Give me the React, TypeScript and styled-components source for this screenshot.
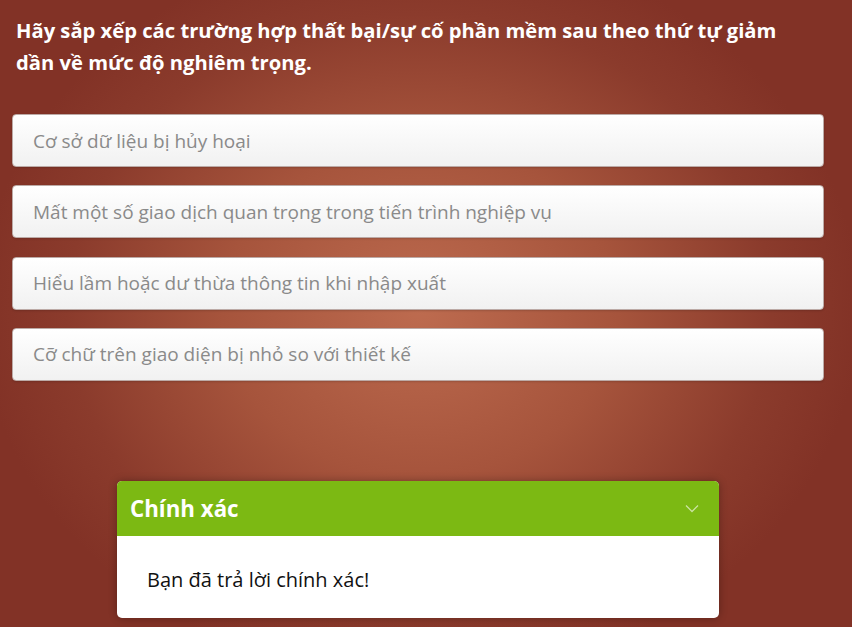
import React from "react";
import styled, { createGlobalStyle } from "styled-components";

const Global = createGlobalStyle`
  html, body { margin: 0; padding: 0; }
  body {
    width: 852px;
    height: 627px;
    overflow: hidden;
    font-family: "Open Sans", "Noto Sans", sans-serif;
  }
`;

const Page = styled.div`
  width: 852px;
  height: 627px;
  box-sizing: border-box;
  background: radial-gradient(ellipse 440px 370px at 420px 310px, #bd6b4f 0%, #a6543c 45%, #8b3b2c 80%, #823226 100%);
  padding: 14px 28px 0 12px;
  display: flex;
  flex-direction: column;
`;

const Title = styled.h1`
  margin: 0 0 0 4px;
  max-width: 785px;
  font-family: "Open Sans", sans-serif;
  font-weight: 700;
  font-size: 20.2px;
  line-height: 32px;
  color: #ffffff;
`;

const List = styled.div`
  margin-top: 36px;
  display: flex;
  flex-direction: column;
  gap: 18.3px;
`;

const Item = styled.div`
  height: 53px;
  box-sizing: border-box;
  border: 1px solid #bcaaa6;
  border-radius: 4px;
  background: linear-gradient(#ffffff, #f1f1f1);
  box-shadow: 0 1px 2px rgba(0, 0, 0, 0.15);
  display: flex;
  align-items: center;
  padding: 0 20px;
  font-family: "Open Sans", sans-serif;
  font-size: 19px;
  color: #8a8a8a;
`;

const Feedback = styled.div`
  margin: 100px 0 0 105px;
  width: 602px;
  border-radius: 5px;
  overflow: hidden;
  background: #ffffff;
  box-shadow: 0 0 8px rgba(0, 0, 0, 0.3);
`;

const FeedbackHeader = styled.div`
  height: 55px;
  background: #7cb913;
  display: flex;
  align-items: center;
  justify-content: space-between;
  padding: 0 20px 0 13px;
`;

const FeedbackTitle = styled.span`
  font-family: "Open Sans", sans-serif;
  font-weight: 700;
  font-size: 22.3px;
  color: #ffffff;
`;

const FeedbackBody = styled.div`
  height: 82px;
  display: flex;
  align-items: center;
  padding: 6px 30px 0;
  box-sizing: border-box;
  font-family: "Open Sans", sans-serif;
  font-size: 20px;
  color: #111111;
`;

const items = [
  "Cơ sở dữ liệu bị hủy hoại",
  "Mất một số giao dịch quan trọng trong tiến trình nghiệp vụ",
  "Hiểu lầm hoặc dư thừa thông tin khi nhập xuất",
  "Cỡ chữ trên giao diện bị nhỏ so với thiết kế",
];

export default function App() {
  return (
    <>
      <Global />
      <Page>
        <Title>
          Hãy sắp xếp các trường hợp thất bại/sự cố phần mềm sau theo thứ tự giảm dần về mức độ nghiêm trọng.
        </Title>
        <List>
          {items.map((t) => (
            <Item key={t}>{t}</Item>
          ))}
        </List>
        <Feedback>
          <FeedbackHeader>
            <FeedbackTitle>Chính xác</FeedbackTitle>
            <svg width="14" height="9" viewBox="0 0 14 9">
              <path d="M1 1.5 L7 7.5 L13 1.5" fill="none" stroke="rgba(255,255,255,0.6)" strokeWidth="1.3" />
            </svg>
          </FeedbackHeader>
          <FeedbackBody>Bạn đã trả lời chính xác!</FeedbackBody>
        </Feedback>
      </Page>
    </>
  );
}
